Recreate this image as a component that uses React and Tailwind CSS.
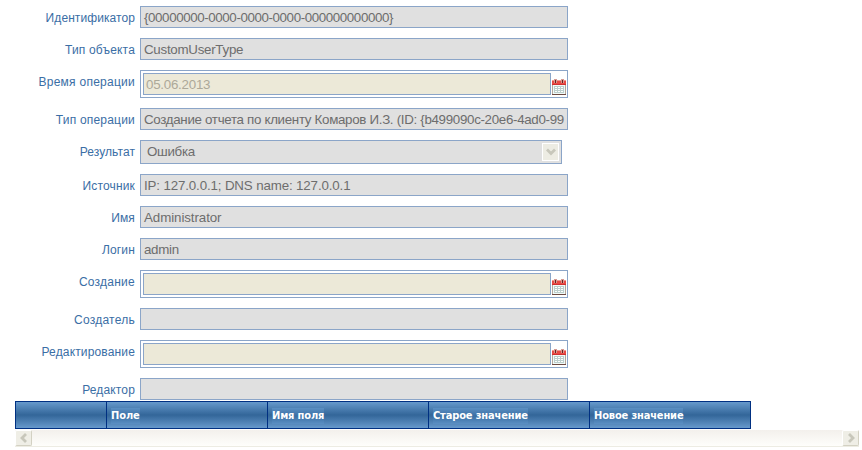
const rows = [
  { label: "Идентификатор", lt: "tracking-[0.08px]", value: "{00000000-0000-0000-0000-000000000000}", ls: "tracking-[-0.39px]" },
  { label: "Тип объекта", lt: "tracking-[0.18px]", value: "CustomUserType", ls: "tracking-[-0.27px]" },
  { label: "Время операции", lt: "tracking-[0.26px]", value: "05.06.2013", kind: "date", ls: "tracking-[-0.25px]" },
  { label: "Тип операции", lt: "tracking-[0.2px]", value: "Создание отчета по клиенту Комаров И.З. (ID: {b499090c-20e6-4ad0-99", ls: "tracking-[-0.31px]" },
  { label: "Результат", lt: "tracking-[0.08px]", value: "Ошибка", kind: "select", ls: "tracking-[-0.3px]" },
  { label: "Источник", lt: "tracking-[0.15px]", value: "IP: 127.0.0.1; DNS name: 127.0.0.1", ls: "tracking-[-0.14px]" },
  { label: "Имя", lt: "tracking-[0.15px]", value: "Administrator", ls: "tracking-[-0.08px]" },
  { label: "Логин", lt: "tracking-[0.15px]", value: "admin", ls: "tracking-[-0.3px]" },
  { label: "Создание", lt: "tracking-[0.25px]", value: "", kind: "date" },
  { label: "Создатель", lt: "tracking-[0.25px]", value: "" },
  { label: "Редактирование", lt: "tracking-[0.15px]", value: "", kind: "date" },
  { label: "Редактор", lt: "tracking-[0.15px]", value: "" },
];

function Calendar() {
  return (
    <svg width="14" height="16" viewBox="0 0 14 16" shapeRendering="crispEdges" className="block shrink-0">
      <rect x="0" y="1" width="14" height="15" fill="#b5a79c" />
      <rect x="0" y="15" width="14" height="1" fill="#6b4a42" />
      <rect x="1" y="6" width="12" height="9" fill="#f1faf8" />
      <rect x="0" y="1" width="14" height="5" fill="#e84a45" />
      <rect x="0" y="1" width="14" height="1" fill="#f3968e" />
      <rect x="0" y="5" width="14" height="1" fill="#d23030" />
      <rect x="2" y="0" width="3" height="4" fill="#d59a92" />
      <rect x="3" y="1" width="1" height="3" fill="#6a2020" />
      <rect x="9" y="0" width="3" height="4" fill="#d59a92" />
      <rect x="10" y="1" width="1" height="3" fill="#6a2020" />
      <rect x="2" y="7" width="10" height="7" fill="#bccfcd" />
      {[8, 10, 12].map((y) =>
        [3, 6, 9].map((x) => <rect key={`${x}-${y}`} x={x} y={y} width="2" height="1" fill="#fff" />)
      )}
    </svg>
  );
}

function Chevron({ d }) {
  return (
    <svg width="10" height="10" viewBox="0 0 10 10" className="block">
      <path d={d} fill="none" stroke="#c8c7bb" strokeWidth="2.8" />
    </svg>
  );
}

function Field({ row }) {
  if (row.kind === "date") {
    return (
      <div className="flex h-7 w-[428px] items-start border border-[#8ba5c8] bg-white pt-0.5 pl-0.5">
        <div className="h-[22px] w-[408px] border border-[#8ba5c8] bg-[#ece9d8] pl-[2px] text-[13.33px] leading-[21px] text-[#aca899]">
          <span className={row.ls}>{row.value}</span>
        </div>
        <div className="mt-[6px] ml-px">
          <Calendar />
        </div>
      </div>
    );
  }
  if (row.kind === "select") {
    return (
      <div className="flex h-6 w-[422px] items-center justify-between border border-[#8ba5c8] bg-[#e0e0e0] pr-[2px] pl-[6px] text-[13.33px] text-[#6d6d6d]">
        <span className={row.ls}>{row.value}</span>
        <div className="flex h-[18px] w-[17px] items-center justify-center border border-white bg-[#edece3]">
          <Chevron d="M1 2.5 L5 6.5 L9 2.5" />
        </div>
      </div>
    );
  }
  return (
    <div className="h-[22px] w-[428px] border border-[#8ba5c8] bg-[#e0e0e0] pl-[3px] text-[13.33px] leading-[21px] text-[#6d6d6d]">
      <div className="h-5 whitespace-nowrap">
        <span className={row.ls}>{row.value}</span>
      </div>
    </div>
  );
}

const headers = [
  { text: "", ls: "" },
  { text: "Поле", ls: "tracking-[-0.1px]" },
  { text: "Имя поля", ls: "tracking-[-0.15px]" },
  { text: "Старое значение", ls: "tracking-[-0.15px]" },
  { text: "Новое значение", ls: "tracking-[-0.15px]" },
];

export default function App() {
  return (
    <div className="h-[450px] w-[862px] overflow-hidden bg-white pt-1.5 font-['Liberation_Sans',Arial,sans-serif]">
      <div className="flex flex-col gap-2.5">
        {rows.map((row) => (
          <div key={row.label} className="flex">
            <div className="mr-[5px] h-[22px] w-[135px] text-right text-[12px] leading-[24px] whitespace-nowrap text-[#3a6ea5]">
              <span className={row.lt}>{row.label}</span>
            </div>
            <Field row={row} />
          </div>
        ))}
      </div>
      <div className="mt-px ml-[15px] grid h-7 w-[736px] grid-cols-[91px_161px_161px_161px_161px] border-y border-l border-[#003082] bg-linear-to-b from-[#6699cc] via-[#336699] to-[#6699cc]">
        {headers.map((h) => (
          <div key={h.text} className="flex items-center border-r border-[#003082] pt-px pl-[4px] font-['DejaVu_Sans_Condensed','DejaVu_Sans',Verdana,sans-serif] text-[11px] font-bold text-white">
            {h.text && (
              <span className={`${h.ls} h-4 bg-linear-to-b from-[#5b8fc3] via-[#3a6fa3] to-[#5b8fc3] leading-4 whitespace-nowrap`}>{h.text}</span>
            )}
          </div>
        ))}
      </div>
      <div className="mt-px ml-[15px] flex h-[17px] w-[844px] items-center justify-between border-b border-[#edece3] bg-linear-to-b from-[#f3f0ec] to-[#fefefb]">
        <div className="flex h-4 w-[17px] items-center justify-center rounded-xs border border-t-white border-r-[#d3d1c3] border-b-[#d3d1c3] border-l-white bg-[#efeee6]">
          <Chevron d="M7 1 L3 5 L7 9" />
        </div>
        <div className="flex h-4 w-[17px] items-center justify-center rounded-xs border border-t-white border-r-[#d3d1c3] border-b-[#d3d1c3] border-l-white bg-[#efeee6]">
          <Chevron d="M3 1 L7 5 L3 9" />
        </div>
      </div>
    </div>
  );
}
